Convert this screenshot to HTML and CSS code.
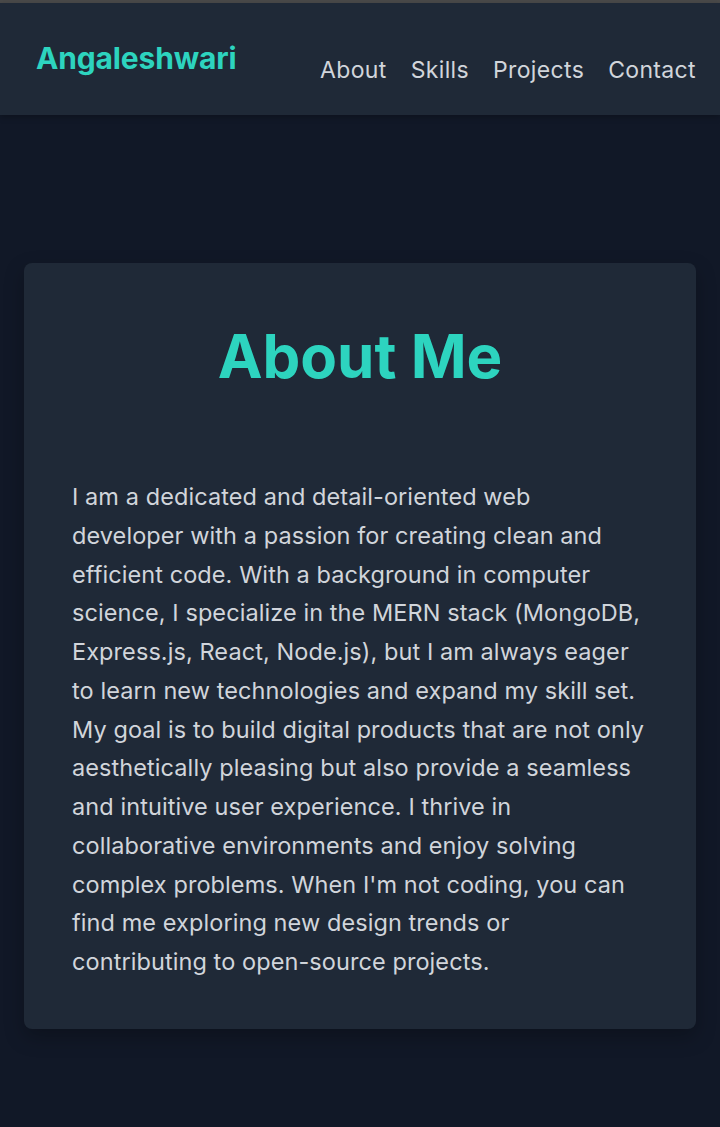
FILE: index.html
```html
<!DOCTYPE html>
<html lang="en">
<head>
<meta charset="utf-8">
<title>Angaleshwari</title>
<link rel="stylesheet" href="styles.css">
</head>
<body>
<div class="topline"></div>
<header class="header">
  <div class="logo">Angaleshwari</div>
  <nav class="nav">
    <a href="#about">About</a>
    <a href="#skills">Skills</a>
    <a href="#projects">Projects</a>
    <a href="#contact">Contact</a>
  </nav>
</header>
<main class="main">
  <section class="card" id="about">
    <h1 class="title">About Me</h1>
    <p class="text">I am a dedicated and detail-oriented web developer with a passion for creating clean and efficient code. With a background in computer science, I specialize in the MERN stack (MongoDB, Express.js, React, Node.js), but I am always eager to learn new technologies and expand my skill set. My goal is to build digital products that are not only aesthetically pleasing but also provide a seamless and intuitive user experience. I thrive in collaborative environments and enjoy solving complex problems. When I'm not coding, you can find me exploring new design trends or contributing to open-source projects.</p>
  </section>
</main>
</body>
</html>
```
FILE: styles.css
```css
* { box-sizing: border-box; }
html, body { margin: 0; padding: 0; }
body {
  background: #111827;
  font-family: Inter, "Noto Sans", sans-serif;
  color: #d1d5db;
  min-height: 1127px;
}
.topline {
  height: 3px;
  background: #4a4a4a;
}
.header {
  background: #1f2937;
  height: 112px;
  display: flex;
  justify-content: space-between;
  align-items: flex-start;
  padding: 0 24px 0 36px;
  box-shadow: 0 2px 6px rgba(0,0,0,0.25);
}
.logo {
  color: #2dd4bf;
  font-weight: 700;
  font-size: 30px;
  margin-top: 37px;
  letter-spacing: -0.15px;
}
.nav {
  display: flex;
  gap: 24px;
  margin-top: 53px;
}
.nav a {
  color: #d1d5db;
  text-decoration: none;
  font-size: 23px;
  letter-spacing: 0.35px;
}
.main {
  padding: 148px 24px 80px;
}
.card {
  background: #1f2937;
  border-radius: 8px;
  padding: 57px 48px 47px;
  box-shadow: 0 8px 20px rgba(0,0,0,0.25);
}
.title {
  margin: 0 0 86px;
  text-align: center;
  color: #2dd4bf;
  font-size: 60px;
  font-weight: 700;
  line-height: 1.2;
}
.text {
  margin: 0;
  font-size: 23.5px;
  letter-spacing: 0.08px;
  line-height: 38.75px;
}
```
